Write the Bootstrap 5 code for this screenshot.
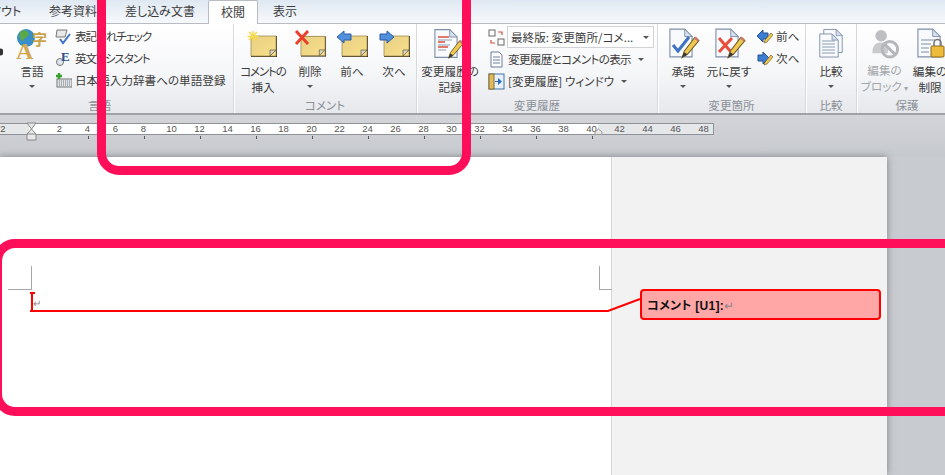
<!DOCTYPE html>
<html lang="ja">
<head>
  <meta charset="UTF-8">
  <title>校閲</title>
  <link href="https://cdn.jsdelivr.net/npm/bootstrap@5.3.2/dist/css/bootstrap.min.css" rel="stylesheet">
  <style>
    html, body { height: 100%; }
    body {
      width: 945px; height: 475px; overflow: hidden; position: relative;
      background: #c8cbd0;
      font-family: "Noto Sans CJK JP", "Liberation Sans", sans-serif;
      font-size: 11.6px; line-height: 16px; color: #3c3c3c;
      font-feature-settings: "palt";
    }
    .tabbar {
      height: 24px; background: linear-gradient(#dfe8f2, #f7f9fb);
      border-bottom: 1px solid #b8bcc2; font-size: 12px;
    }
    .tabitem { padding-top: 3px; white-space: nowrap; flex: none; }
    .tabitem.on {
      height: 24px; background: #fff; border: 1px solid #b8bcc2; border-bottom: 0;
      border-radius: 2px 2px 0 0; text-align: center;
    }
    .ribbon {
      height: 91px; background: linear-gradient(#fff, #f5f6f8 55%, #e6e8ec);
      border-bottom: 2px solid #9fa3a9; overflow: hidden;
    }
    .rgroup { flex: none; height: 89px; border-right: 1px solid #d5d8dc; box-shadow: 1px 0 0 #fff; position: relative; }
    .rgroup-body { height: 72px; padding-top: 4px; }
    .rgroup-name { height: 17px; padding-top: 1px; text-align: center; color: #8b9097; line-height: 16px; }
    .bigbtn { flex: none; display: flex; flex-direction: column; align-items: center; white-space: nowrap; line-height: 16px; }
    .bigbtn svg { display: block; height: 32px; margin-bottom: 3px; }
    .caret-dn { width: 0; height: 0; border: 3px solid transparent; border-top: 3px solid #555; border-bottom: 0; margin-top: 6px; }
    .faded { color: #a3a6aa; }
    .kana-tight { letter-spacing: -1.2px; }
    .kana-mid { letter-spacing: -.7px; }
    .smallcol { margin-top: -3px; }
    .smallcol-b { margin-top: -2px; }
    .smallrow { height: 22px; display: flex; align-items: center; gap: 3px; white-space: nowrap; }
    .smallrow svg { flex: none; width: 17px; height: 17px; }
    .combo {
      width: 147px; height: 22px; border: 1px solid #d0d3d8; background: #fff;
      display: flex; align-items: center; justify-content: space-between; padding: 0 4px 0 3px; margin-left: 2px;
    }
    .ruler-row { height: 42px; padding-top: 8px; position: relative; background: linear-gradient(#d3d5d9, #c6c9ce); }
    .rulerstrip {
      position: relative; width: 714px; height: 12px; background: #fff;
      border: 1px solid #8f9296; border-left: 0;
    }
    .rulerstrip .leftm { position: absolute; left: 0; top: 0; bottom: 0; width: 29px; background: #e6e7e9; }
    .rulerstrip .rightm { position: absolute; left: 598px; top: 0; bottom: 0; right: 0; background: #e6e7e9; }
    .rnum { position: absolute; top: -1px; width: 20px; margin-left: -10px; text-align: center; font-size: 9.5px; line-height: 12px; color: #555; font-family: "Liberation Sans", sans-serif; }
    .rtick { position: absolute; top: 12px; width: 1px; height: 3px; background: #555; }
    .indentmark { position: absolute; left: 26px; top: -2px; width: 11px; height: 19px; }
    .rightmark { position: absolute; left: 594px; top: 4px; width: 9px; height: 7px; }
    .workspace { height: 318px; }
    .docpage {
      width: 887px; height: 318px; background: #fff; position: relative;
      box-shadow: 0 0 7px rgba(70,70,70,.55);
    }
    .markup-area { position: absolute; left: 611px; top: 0; bottom: 0; right: 0; background: #f2f2f2; border-left: 1px solid #d8d8d8; }
    .crop { position: absolute; width: 13px; height: 24px; border-color: #a8a8a8; border-style: solid; border-width: 0; }
    .crop-l { left: 8px; top: 109px; border-right-width: 1px; border-bottom-width: 1px; width: 24px; }
    .crop-r { left: 599px; top: 109px; border-left-width: 1px; border-bottom-width: 1px; }
    .para-mark { position: absolute; left: 33px; top: 141px; color: #888; font-size: 10px; line-height: 10px; }
    .balloon {
      position: absolute; left: 640px; top: 132px; width: 241px; height: 31px;
      background: #ffa6a6; border: 2px solid #f00; border-radius: 4px;
      font-family: "Liberation Sans", "Noto Sans CJK JP", sans-serif;
      font-size: 12px; font-weight: 700; color: #111; line-height: 30px; padding-left: 5px; white-space: nowrap;
      letter-spacing: .3px;
    }
    .balloon span { color: #888; font-weight: 400; }
    .connector { position: absolute; left: 30px; top: 133px; width: 620px; height: 30px; overflow: visible; }
    .callout { position: absolute; border: 9px solid #ff0f5a; border-radius: 22px; pointer-events: none; }
    .callout-a { left: 97px; top: -60px; width: 374px; height: 235px; }
    .callout-b { left: -7px; top: 239px; width: 1000px; height: 177px; }
  </style>
</head>
<body>
  <svg width="0" height="0" class="position-absolute">
    <defs>
      <linearGradient id="gold" x1="0" y1="0" x2="1" y2="1">
        <stop offset="0" stop-color="#e8cf84"/><stop offset="1" stop-color="#f8e08a"/>
      </linearGradient>
      <symbol id="note" viewBox="0 0 28 23">
        <path d="M1 1h26v21H1z" fill="#3c3424"/>
        <path d="M1 1h25v20H1z" fill="url(#gold)" stroke="#a08d54" stroke-width=".8"/>
        <path d="M20 21v-6h6z" fill="#d9d4c4" stroke="#6d6444" stroke-width=".8"/>
      </symbol>
      <symbol id="pencil" viewBox="0 0 20 24">
        <path d="M3 22l2-6L15 3l4 3L8 19z" fill="#f1c84f" stroke="#6b5a2a" stroke-width="1"/>
        <path d="M14 4l4 3 1-2-3-3z" fill="#c97a6a"/>
        <path d="M3 22l2-5 3 2z" fill="#333"/>
      </symbol>
      <symbol id="sheet" viewBox="0 0 26 32">
        <path d="M1 1h16l8 8v22H1z" fill="#f8fafd" stroke="#7e8fa8" stroke-width="1.2"/>
        <path d="M17 1v8h8z" fill="#d6e0ee" stroke="#7e8fa8"/>
      </symbol>
    </defs>
  </svg>

  <div class="tabbar d-flex">
    <div class="tabitem" style="margin-left:-10px;width:59px">アウト</div>
    <div class="tabitem" style="width:76px">参考資料</div>
    <div class="tabitem" style="width:83px">差し込み文書</div>
    <div class="tabitem on" style="width:50px">校閲</div>
    <div class="tabitem" style="margin-left:15px">表示</div>
  </div>

  <div class="ribbon d-flex">
    <div class="rgroup" style="width:234px">
      <div class="rgroup-body d-flex">
        <svg viewBox="0 0 3 10" width="3" height="10" class="flex-none" style="margin-top:19px"><circle cx="0" cy="5" r="3.500" fill="#333"/></svg>
        <div class="bigbtn" style="width:52px;padding-left:6px">
          <svg viewBox="0 0 34 32" width="34">
            <circle cx="11" cy="10" r="9" fill="#3a8ec9"/>
            <path d="M5 4c4-3 8-2 9 2-1 4-5 3-6 7-3-1-5-5-3-9z" fill="#5aa84a"/>
            <text x="17" y="17" font-size="15" font-weight="700" fill="#c9a24a" font-family="Noto Sans CJK JP">字</text>
            <text x="1" y="31" font-size="24" font-weight="700" fill="#d2a84e" font-family="Liberation Serif">A</text>
          </svg>
          <div>言語</div><div class="caret-dn"></div>
        </div>
        <div class="smallcol">
          <div class="smallrow"><svg viewBox="0 0 17 17"><path d="M2 2h10l-2 7H1z" fill="#e8e8e8" stroke="#777"/><path d="M5 11l3 4 7-9" fill="none" stroke="#3f74c4" stroke-width="2"/></svg><span class="kana-tight">表記ゆれチェック</span></div>
          <div class="smallrow"><svg viewBox="0 0 17 17"><circle cx="5" cy="12" r="3.5" fill="#dfe6ef" stroke="#777"/><text x="6" y="11" font-size="13" font-weight="700" fill="#2c4f8f" font-family="Liberation Serif">E</text></svg><span class="kana-tight">英文アシスタント</span></div>
          <div class="smallrow"><svg viewBox="0 0 17 17"><rect x="2" y="7" width="15" height="8" fill="#dfe3ea" stroke="#777"/><path d="M4 9h11M4 11h11M4 13h11" stroke="#777" stroke-dasharray="1 1"/><path d="M4 1v6M1 4h6" stroke="#3aa02c" stroke-width="2.4"/></svg>日本語入力辞書への単語登録</div>
        </div>
      </div>
      <div class="rgroup-name" style="padding-right:34px">言語</div>
    </div>

    <div class="rgroup" style="width:183px">
      <div class="rgroup-body d-flex">
        <div class="bigbtn" style="width:58px">
          <svg viewBox="0 0 34 32" width="34">
            <use href="#note" x="4" y="7" width="28" height="23"/>
            <path d="M7 3v11M1.500 8.500h11M3 4l8 8M11 4l-8 8" stroke="#f7d94c" stroke-width="1.500"/>
          </svg>
          <div class="text-center"><span class="kana-tight">コメントの</span><br>挿入</div>
        </div>
        <div class="bigbtn" style="width:36px">
          <svg viewBox="0 0 34 32" width="34">
            <use href="#note" x="7" y="7" width="27" height="23"/>
            <path d="M3 3l12 13M15 3L3 16" stroke="#e8402c" stroke-width="3"/>
          </svg>
          <div>削除</div><div class="caret-dn"></div>
        </div>
        <div class="bigbtn" style="width:48px">
          <svg viewBox="0 0 34 32" width="34">
            <use href="#note" x="6" y="7" width="28" height="23"/>
            <path d="M2 9l7-6v3h7v6H9v3z" fill="#4f8fdc" stroke="#2c5da5"/>
          </svg>
          <div>前へ</div>
        </div>
        <div class="bigbtn" style="width:36px">
          <svg viewBox="0 0 34 32" width="34">
            <use href="#note" x="6" y="7" width="28" height="23"/>
            <path d="M17 9l-7-6v3H3v6h7v3z" fill="#4f8fdc" stroke="#2c5da5"/>
          </svg>
          <div>次へ</div>
        </div>
      </div>
      <div class="rgroup-name">コメント</div>
    </div>

    <div class="rgroup" style="width:241px">
      <div class="rgroup-body d-flex">
        <div class="bigbtn" style="width:66px;margin-right:5px">
          <svg viewBox="0 0 34 32" width="34"><use href="#sheet" x="1" y="0" width="24" height="31"/><path d="M5 9h11M5 14h7M5 19h10" stroke="#d9503c" stroke-width="1.4"/><path d="M5 12h14M5 17h12M5 22h8" stroke="#8c9db5"/><use href="#pencil" x="12" y="10" width="20" height="22"/></svg>
          <div class="text-center">変更履歴の<br>記録</div>
        </div>
        <div class="smallcol-b">
          <div class="smallrow" style="gap:0"><svg viewBox="0 0 17 17"><rect x="1" y="1" width="6" height="6" fill="#fff" stroke="#666"/><rect x="10" y="10" width="6" height="6" fill="#fff" stroke="#666"/><path d="M10 3h4v3M7 14H3v-3" fill="none" stroke="#d9503c" stroke-width="1.2"/></svg><div class="combo"><span>最終版: 変更箇所/コメ...</span><span class="caret-dn m-0"></span></div></div>
          <div class="smallrow"><svg viewBox="0 0 17 17"><path d="M3 1h8l3 3v12H3z" fill="#fff" stroke="#6b7f9d"/><path d="M5 6h7M5 9h7M5 12h7" stroke="#6b7f9d"/></svg><span class="kana-mid">変更履歴とコメントの表示</span><span class="caret-dn m-0 ms-1"></span></div>
          <div class="smallrow"><svg viewBox="0 0 17 17"><rect x="1" y="1" width="15" height="15" fill="#e8f0fa" stroke="#3f74a8"/><rect x="1" y="1" width="5" height="15" fill="#e0bb5e" stroke="#8a6f2c"/><path d="M7 8h3V5l4 3.5-4 3.500V9H7z" fill="#2c6bc4"/></svg>[変更履歴] ウィンドウ<span class="caret-dn m-0 ms-1"></span></div>
        </div>
      </div>
      <div class="rgroup-name">変更履歴</div>
    </div>

    <div class="rgroup" style="width:148px">
      <div class="rgroup-body d-flex">
        <div class="bigbtn" style="width:50px">
          <svg viewBox="0 0 34 32" width="34"><use href="#sheet" x="3" y="0" width="24" height="30"/><path d="M7 17l5 6 11-14" fill="none" stroke="#3f74c4" stroke-width="3"/><use href="#pencil" x="13" y="6" width="21" height="26"/></svg>
          <div>承諾</div><div class="caret-dn"></div>
        </div>
        <div class="bigbtn" style="width:42px">
          <svg viewBox="0 0 34 32" width="34"><use href="#sheet" x="3" y="0" width="24" height="30"/><path d="M7 10l12 14M20 10L7 24" stroke="#e8503c" stroke-width="3"/><use href="#pencil" x="13" y="6" width="21" height="26"/></svg>
          <div>元に戻す</div><div class="caret-dn"></div>
        </div>
        <div class="smallcol" style="margin-left:6px">
          <div class="smallrow"><svg viewBox="0 0 17 17"><path d="M1 8l6-6v3h5v6H7v3z" fill="#3b7fd4" stroke="#245091"/><path d="M8 15l1-3 6-7 2 2-6 7z" fill="#f1c84f" stroke="#5c4c24" stroke-width=".6"/></svg>前へ</div>
          <div class="smallrow"><svg viewBox="0 0 17 17"><path d="M13 8L7 2v3H2v6h5v3z" fill="#3b7fd4" stroke="#245091"/><path d="M8 15l1-3 6-7 2 2-6 7z" fill="#f1c84f" stroke="#5c4c24" stroke-width=".6"/></svg>次へ</div>
        </div>
      </div>
      <div class="rgroup-name">変更箇所</div>
    </div>

    <div class="rgroup" style="width:51px">
      <div class="rgroup-body d-flex justify-content-center">
        <div class="bigbtn">
          <svg viewBox="0 0 28 32" width="28"><use href="#sheet" x="6" y="0" width="20" height="26"/><use href="#sheet" x="2" y="4" width="20" height="27"/><path d="M5 13h13M5 16h13M5 19h13M5 22h13M5 25h13" stroke="#8c9db5"/></svg>
          <div>比較</div><div class="caret-dn"></div>
        </div>
      </div>
      <div class="rgroup-name">比較</div>
    </div>

    <div class="rgroup" style="width:100px;border-right:0">
      <div class="rgroup-body d-flex">
        <div class="bigbtn faded" style="width:55px">
          <svg viewBox="0 0 32 32" width="32"><circle cx="12" cy="8" r="6" fill="#bdbfc2"/><path d="M3 26c0-9 4-11 9-11s6 2 7 4v7z" fill="#c9cacc"/><circle cx="21" cy="22" r="8" fill="none" stroke="#b4b6b9" stroke-width="3"/><path d="M15 16l12 12" stroke="#b4b6b9" stroke-width="3"/></svg>
          <div class="text-center">編集の<br>ブロック <span style="font-size:8px">▾</span></div>
        </div>
        <div class="bigbtn" style="width:36px">
          <svg viewBox="0 0 32 32" width="32"><use href="#sheet" x="3" y="0" width="24" height="30"/><path d="M7 12h14M7 16h10M7 20h8M7 24h8" stroke="#7e8fa8"/><rect x="17" y="18" width="13" height="11" rx="1" fill="#eebc3c" stroke="#8a6a1c"/><path d="M20 18v-3a3.500 3.500 0 0 1 7 0v3" fill="none" stroke="#777" stroke-width="1.6"/></svg>
          <div class="text-center">編集の<br>制限</div>
        </div>
      </div>
      <div class="rgroup-name">保護</div>
    </div>
  </div>

  <div class="ruler-row">
    <div class="rulerstrip" id="ruler">
      <div class="leftm"></div><div class="rightm"></div>
    </div>
  </div>

  <div class="workspace">
    <div class="docpage">
      <div class="markup-area"></div>
      <div class="crop crop-l"></div>
      <div class="crop crop-r"></div>
      <svg class="connector" viewBox="0 0 620 30">
        <path d="M2 4V20M0 3h5M0 21H578L610 9" fill="none" stroke="#f00" stroke-width="2"/>
      </svg>
      <div class="para-mark">↵</div>
      <div class="balloon">コメント [U1]:<span>↵</span></div>
    </div>
  </div>

  <div class="callout callout-a"></div>
  <div class="callout callout-b"></div>

  <script>
    // ruler numbers: 28px per 2 units, zero at the indent marker
    const ruler = document.getElementById("ruler");
    const zero = 31.5;
    let html = '<div class="rnum" style="left:3px">2</div>';
    for (let n = 2; n <= 48; n += 2) {
      const x = zero + n * 14;
      html += `<div class="rnum" style="left:${x}px">${n}</div>`;
      if (n % 4 === 0 && n <= 40) html += `<div class="rtick" style="left:${x}px"></div>`;
    }
    html += '<svg class="indentmark" viewBox="0 0 11 19"><path d="M1 1h9L5.500 7l4.500 5v6H1v-6l4.500-5z" fill="#e8e8e8" stroke="#888"/><path d="M1 12h9" stroke="#888"/></svg>';
    html += '<svg class="rightmark" viewBox="0 0 9 7"><path d="M1 6.500V4l3.500-3L8 4v2.500z" fill="#e8e8e8" stroke="#999"/></svg>';
    ruler.insertAdjacentHTML("beforeend", html);
  </script>
  <script src="https://cdn.jsdelivr.net/npm/bootstrap@5.3.2/dist/js/bootstrap.bundle.min.js"></script>
</body>
</html>
